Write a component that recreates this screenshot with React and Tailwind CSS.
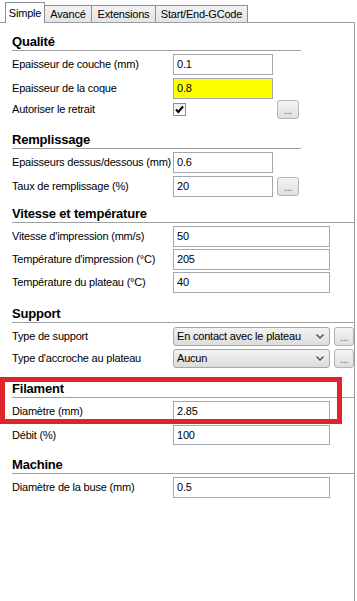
import React from 'react';

function Header({ title, short, className = '' }) {
  return (
    <div className={`flex h-[26px] ${className}`}>
      <div className={`flex h-full items-end border-b border-[#a0a0a0] ${short ? 'w-[289px]' : 'flex-1'}`}>
        <span className="text-[13px] font-bold leading-[16px] text-black">{title}</span>
      </div>
    </div>
  );
}

function Row({ label, className = '', children }) {
  return (
    <div className={`flex items-center ${className}`}>
      <div className="w-[161px] shrink-0 text-[11px] leading-[13px] text-black">{label}</div>
      {children}
    </div>
  );
}

function TextBox({ value, wide, yellow }) {
  return (
    <div
      className={`flex h-full items-center border border-[#a3a7ae] pl-[3px] text-[11px] leading-[13px] text-black ${
        wide ? 'w-[157px]' : 'w-[100px]'
      } ${yellow ? 'bg-[#ffff00]' : 'bg-white'}`}
    >
      {value}
    </div>
  );
}

function DotsButton({ narrow }) {
  return (
    <div
      className={`ml-[4px] flex h-[19px] items-center justify-center rounded-[3px] border border-[#b5b5b5] bg-gradient-to-b from-[#f4f4f4] to-[#dedede] pt-[3px] text-[10px] leading-[10px] text-[#555] ${
        narrow ? 'w-[20px]' : 'w-[22px]'
      }`}
    >
      ...
    </div>
  );
}

function Combo({ value }) {
  return (
    <div className="flex h-full w-[158px] items-center justify-between rounded-[3px] border border-[#a8a8a8] bg-gradient-to-b from-[#f3f3f3] to-[#dcdcdc] pl-[3px] pr-[5px] text-[11px] leading-[13px] text-black">
      <span>{value}</span>
      <svg width="8" height="5" viewBox="0 0 8 5">
        <polyline points="0.5,0.5 4,4 7.5,0.5" fill="none" stroke="#555" strokeWidth="1.5" />
      </svg>
    </div>
  );
}

function CheckBox() {
  return (
    <div className="flex h-[13px] w-[13px] items-center justify-center border border-[#8f8f8f] bg-gradient-to-b from-[#eeeeee] to-white">
      <svg width="11" height="11" viewBox="0 0 11 11">
        <path d="M2 5.5 L4.3 8 L9 2.5" fill="none" stroke="#000" strokeWidth="2" />
      </svg>
    </div>
  );
}

const tabs = [
  { name: 'Avancé', w: 'w-[47px]' },
  { name: 'Extensions', w: 'w-[64px]' },
  { name: 'Start/End-GCode', w: 'w-[92px]' },
];

export default function App() {
  return (
    <div className="relative h-[601px] w-[357px] overflow-hidden bg-white font-['Liberation_Sans',Arial,sans-serif] tracking-[-0.2px]">
      {/* Tabs */}
      <div className="flex h-[22px] items-end pl-[5px]">
        <div className="relative top-px flex h-[21px] w-[40px] items-center justify-center border-x border-t border-[#8c8e94] bg-white text-[11px] leading-[13px] text-black">
          Simple
        </div>
        {tabs.map(t => (
          <div
            key={t.name}
            className={`flex h-[17px] items-center justify-center border-r border-t border-[#8c8e94] bg-gradient-to-b from-[#f2f2f2] to-[#e4e4e4] pt-px text-[11px] leading-[13px] text-black ${t.w}`}
          >
            {t.name}
          </div>
        ))}
      </div>

      {/* Panel */}
      <div className="h-[579px] w-[355px] border-r border-t border-[#9a9ca2] bg-white pl-[12px]">
        <Header title="Qualité" short className="mt-[2px]" />
        <Row label="Epaisseur de couche (mm)" className="mt-[3px] h-[21px]">
          <TextBox value="0.1" />
        </Row>
        <Row label="Epaisseur de la coque" className="mt-[3px] h-[21px]">
          <TextBox value="0.8" yellow />
        </Row>
        <Row label="Autoriser le retrait" className="mt-[1px] h-[19px]">
          <div className="w-[100px]">
            <CheckBox />
          </div>
          <DotsButton />
        </Row>

        <Header title="Remplissage" short className="mt-[4px]" />
        <Row label="Epaisseurs dessus/dessous (mm)" className="mt-[3px] h-[21px]">
          <TextBox value="0.6" />
        </Row>
        <Row label="Taux de remplissage (%)" className="mt-[3px] h-[21px]">
          <TextBox value="20" />
          <DotsButton />
        </Row>

        <Header title="Vitesse et température" />
        <Row label="Vitesse d'impression (mm/s)" className="mt-[3px] h-[21px]">
          <TextBox value="50" wide />
        </Row>
        <Row label="Température d'impression (°C)" className="mt-[2px] h-[21px]">
          <TextBox value="205" wide />
        </Row>
        <Row label="Température du plateau (°C)" className="mt-[2px] h-[21px]">
          <TextBox value="40" wide />
        </Row>

        <Header title="Support" className="mt-[4px]" />
        <Row label="Type de support" className="mt-[4px] h-[19px]">
          <Combo value="En contact avec le plateau" />
          <DotsButton narrow />
        </Row>
        <Row label="Type d'accroche au plateau" className="mt-[3px] h-[19px]">
          <Combo value="Aucun" />
          <DotsButton narrow />
        </Row>

        <Header title="Filament" className="mt-[4px]" />
        <Row label="Diamètre (mm)" className="mt-[3px] h-[21px]">
          <TextBox value="2.85" wide />
        </Row>
        <Row label="Débit (%)" className="mt-[3px] h-[20px]">
          <TextBox value="100" wide />
        </Row>

        <Header title="Machine" className="mt-[3px]" />
        <Row label="Diamètre de la buse (mm)" className="mt-[3px] h-[21px]">
          <TextBox value="0.5" wide />
        </Row>
      </div>

      {/* Annotation */}
      <div className="pointer-events-none absolute left-0 top-[377px] h-[47px] w-[342px] border-[5px] border-[#e0242c]" />
    </div>
  );
}
